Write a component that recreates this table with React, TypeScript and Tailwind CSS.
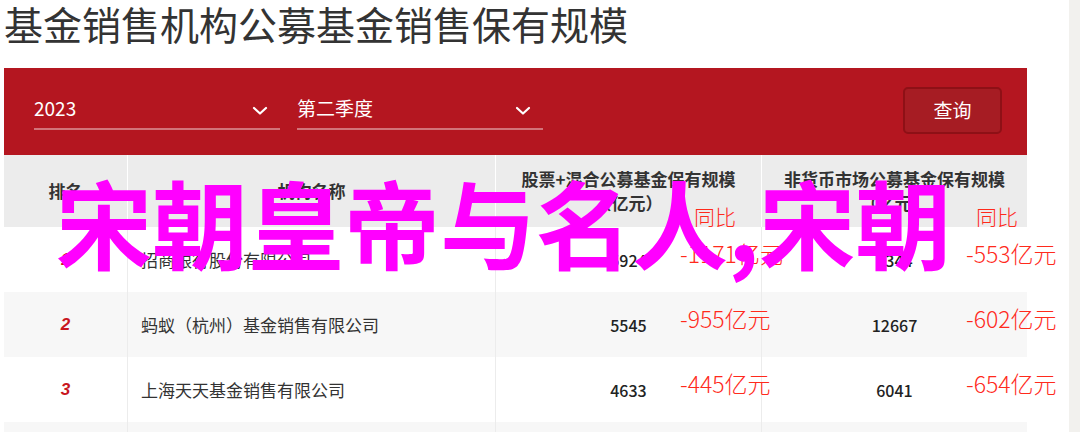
import React from 'react';

const ROWS = [
  { rank: '1', name: '招商银行股份有限公司', stock: '5924', stockYoy: '-1171亿元', nonMoney: '8344', nonMoneyYoy: '-553亿元' },
  { rank: '2', name: '蚂蚁（杭州）基金销售有限公司', stock: '5545', stockYoy: '-955亿元', nonMoney: '12667', nonMoneyYoy: '-602亿元' },
  { rank: '3', name: '上海天天基金销售有限公司', stock: '4633', stockYoy: '-445亿元', nonMoney: '6041', nonMoneyYoy: '-654亿元' },
  { rank: '4', name: '中国工商银行股份有限公司', stock: '4400', stockYoy: '-500亿元', nonMoney: '4900', nonMoneyYoy: '-380亿元' },
];

const Chevron: React.FC = () => (
  <svg width="16" height="10" viewBox="0 0 16 10" fill="none">
    <path d="M2 2l6 5.5L14 2" stroke="white" strokeWidth="2.2" strokeLinecap="round" strokeLinejoin="round" />
  </svg>
);

const Select: React.FC<{ value: string }> = ({ value }) => (
  <div className="w-[246px] self-start pt-[26px]">
    <div className="flex h-[28px] items-center justify-between border-b-2 border-white/40 pb-[6px] box-content">
      <span className="text-[19px] leading-[28px] text-white">{value}</span>
      <span className="mr-[12px] mt-[6px]"><Chevron /></span>
    </div>
  </div>
);

const App: React.FC = () => {
  return (
    <div className="flex h-[432px] w-[1080px] overflow-hidden bg-white font-['Noto_Sans_CJK_SC',sans-serif]">
      <div className="relative w-[1069px]">
        <h1 className="h-[68px] pl-[4px] text-[39px] font-normal leading-[46px] text-[#333]">
          基金销售机构公募基金销售保有规模
        </h1>

        <div className="ml-[4px] w-[1023px]">
          <div className="flex h-[87px] bg-[#b41620] pl-[30px] pr-[25px]">
            <Select value="2023" />
            <div className="ml-[17px]">
              <Select value="第二季度" />
            </div>
            <button className="ml-auto mt-[19px] h-[47px] w-[99px] rounded-[5px] border-2 border-[#8e1016] bg-[#a61c23] text-[19px] text-white">
              查询
            </button>
          </div>

          <div className="grid grid-cols-[124px_368px_266px_265px] text-[#333]">
            <div className="flex h-[72px] items-center justify-center border-r border-white bg-[#ececec] text-[17px] font-bold">
              排名
            </div>
            <div className="flex h-[72px] items-center justify-center border-r border-white bg-[#ececec] text-[17px] font-bold">
              机构名称
            </div>
            <div className="relative flex h-[72px] flex-col items-center justify-center border-r border-white bg-[#ececec] text-[17px] font-bold leading-[24px]">
              <span>股票+混合公募基金保有规模</span>
              <span>（亿元）</span>
              <span className="absolute left-[198px] top-[51px] text-[21px] font-light leading-none text-[#ff2a1c]">同比</span>
            </div>
            <div className="relative flex h-[72px] flex-col items-center justify-center bg-[#ececec] text-[17px] font-bold leading-[24px]">
              <span>非货币市场公募基金保有规模</span>
              <span>（亿元）</span>
              <span className="absolute left-[214px] top-[51px] text-[21px] font-light leading-none text-[#ff2a1c]">同比</span>
            </div>

            {ROWS.map((row, i) => {
              const bg = i % 2 === 1 ? 'bg-[#f7f7f7]' : 'bg-white';
              return (
                <React.Fragment key={row.rank}>
                  <div className={`flex h-[65px] items-center justify-center border-r border-[#ececec] ${bg}`}>
                    <span className="text-[17px] font-bold italic text-[#c8151e] font-['Liberation_Sans',sans-serif]">{row.rank}</span>
                  </div>
                  <div className={`flex h-[65px] items-center border-r border-[#ececec] pl-[13px] text-[17px] ${bg}`}>
                    {row.name}
                  </div>
                  <div className={`relative flex h-[65px] items-center justify-center border-r border-[#ececec] ${bg}`}>
                    <span className="text-[16px] font-medium text-[#222]">{row.stock}</span>
                    <span className="absolute left-[184px] top-[15px] z-10 whitespace-nowrap text-[23px] font-light leading-none text-[#ff2a1c]">
                      {row.stockYoy}
                    </span>
                  </div>
                  <div className={`relative flex h-[65px] items-center justify-center ${bg}`}>
                    <span className="text-[16px] font-medium text-[#222]">{row.nonMoney}</span>
                    <span className="absolute left-[204px] top-[15px] z-10 whitespace-nowrap text-[23px] font-light leading-none text-[#ff2a1c]">
                      {row.nonMoneyYoy}
                    </span>
                  </div>
                </React.Fragment>
              );
            })}
          </div>
        </div>

        <div className="pointer-events-none absolute left-[56px] top-[173px] z-20 whitespace-nowrap text-[96px] font-bold leading-none text-[#ff00ff]">
          宋朝皇帝与名人,宋朝
        </div>
      </div>
      <div className="w-[11px] bg-[#f2f1ee]" />
    </div>
  );
};

export default App;
